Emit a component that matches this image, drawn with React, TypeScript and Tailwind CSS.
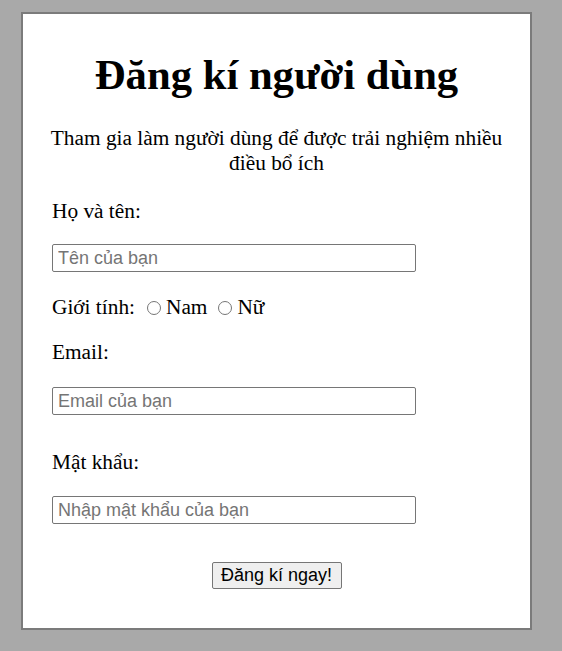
export default function App() {
  return (
    <div className="min-h-[651px] bg-[#a9a9a9] pt-[12px] pb-[21px] font-['Liberation_Serif',serif] text-black">
      <div className="ml-[21px] w-[511px] border-2 border-[#7b7b7b] bg-white px-[29px] pt-[38px] pb-[39px]">
        <h1 className="text-center text-[42.67px] font-bold leading-[46px]">Đăng kí người dùng</h1>
        <p className="-mx-[6px] mt-[28px] text-center text-[21.33px] leading-[25px]">
          Tham gia làm người dùng để được trải nghiệm nhiều điều bổ ích
        </p>

        {/* Name */}
        <p className="mt-[23px] text-[21.33px] leading-[25px]">Họ và tên:</p>
        <input
          type="text"
          placeholder="Tên của bạn"
          className="mt-[20px] block h-[28px] w-[364px] rounded-[2px] border border-[#767676] px-[5px] font-['Liberation_Sans',sans-serif] text-[18px] placeholder:text-[#757575]"
        />

        {/* Gender */}
        <div className="mt-[23px] flex items-center text-[21.33px] leading-[25px]">
          <span>Giới tính:</span>
          <label className="ml-[12px] flex items-center">
            <input type="radio" name="gender" className="m-0 h-[14px] w-[14px]" />
            <span className="ml-[5px]">Nam</span>
          </label>
          <label className="ml-[11px] flex items-center">
            <input type="radio" name="gender" className="m-0 h-[14px] w-[14px]" />
            <span className="ml-[5px]">Nữ</span>
          </label>
        </div>

        {/* Email */}
        <p className="mt-[20px] text-[21.33px] leading-[25px]">Email:</p>
        <input
          type="email"
          placeholder="Email của bạn"
          className="mt-[22px] block h-[28px] w-[364px] rounded-[2px] border border-[#767676] px-[5px] font-['Liberation_Sans',sans-serif] text-[18px] placeholder:text-[#757575]"
        />

        {/* Password */}
        <p className="mt-[35px] text-[21.33px] leading-[25px]">Mật khẩu:</p>
        <input
          type="password"
          placeholder="Nhập mật khẩu của bạn"
          className="mt-[21px] block h-[28px] w-[364px] rounded-[2px] border border-[#767676] px-[5px] font-['Liberation_Sans',sans-serif] text-[18px] placeholder:text-[#757575]"
        />

        <div className="mt-[38px] flex justify-center">
          <button
            type="submit"
            className="h-[27px] w-[130px] rounded-[2px] border border-[#767676] bg-[#efefef] font-['Liberation_Sans',sans-serif] text-[18px] leading-[25px]"
          >
            Đăng kí ngay!
          </button>
        </div>
      </div>
    </div>
  )
}
